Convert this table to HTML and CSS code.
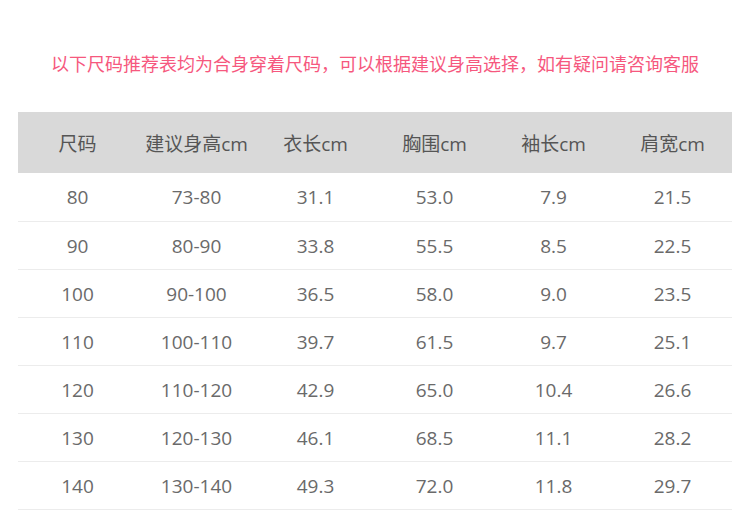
FILE: index.html
```html
<!DOCTYPE html>
<html lang="zh">
<head>
<meta charset="utf-8">
<link rel="stylesheet" href="styles.css">
</head>
<body>
<div class="page">
  <p class="note">以下尺码推荐表均为合身穿着尺码，可以根据建议身高选择，如有疑问请咨询客服</p>
  <div class="table">
    <div class="row head">
      <div>尺码</div><div>建议身高cm</div><div>衣长cm</div><div>胸围cm</div><div>袖长cm</div><div>肩宽cm</div>
    </div>
    <div class="row"><div>80</div><div>73-80</div><div>31.1</div><div>53.0</div><div>7.9</div><div>21.5</div></div>
    <div class="row"><div>90</div><div>80-90</div><div>33.8</div><div>55.5</div><div>8.5</div><div>22.5</div></div>
    <div class="row"><div>100</div><div>90-100</div><div>36.5</div><div>58.0</div><div>9.0</div><div>23.5</div></div>
    <div class="row"><div>110</div><div>100-110</div><div>39.7</div><div>61.5</div><div>9.7</div><div>25.1</div></div>
    <div class="row"><div>120</div><div>110-120</div><div>42.9</div><div>65.0</div><div>10.4</div><div>26.6</div></div>
    <div class="row"><div>130</div><div>120-130</div><div>46.1</div><div>68.5</div><div>11.1</div><div>28.2</div></div>
    <div class="row"><div>140</div><div>130-140</div><div>49.3</div><div>72.0</div><div>11.8</div><div>29.7</div></div>
  </div>
</div>
</body>
</html>
```

FILE: styles.css
```css
html, body {
  margin: 0;
  padding: 0;
  background: #fff;
}
.page {
  width: 750px;
  font-family: "Noto Sans CJK SC", "Noto Sans", sans-serif;
}
.note {
  margin: 0;
  padding-top: 50px;
  height: 62px;
  line-height: 26px;
  text-align: center;
  font-size: 18px;
  color: #f6587e;
}
.table {
  margin: 0 18px;
  width: 714px;
}
.row {
  display: grid;
  grid-template-columns: repeat(6, 1fr);
  box-sizing: border-box;
  height: 48px;
  border-bottom: 1px solid #ececec;
  align-items: center;
  text-align: center;
  font-family: "Open Sans", "Noto Sans CJK SC", sans-serif;
  font-size: 19px;
  color: #6a6a6a;
}
.row.head {
  height: 61px;
  background: #d9d9d9;
  border-bottom: none;
  color: #555;
}
.row.head + .row {
  height: 49px;
}
```
